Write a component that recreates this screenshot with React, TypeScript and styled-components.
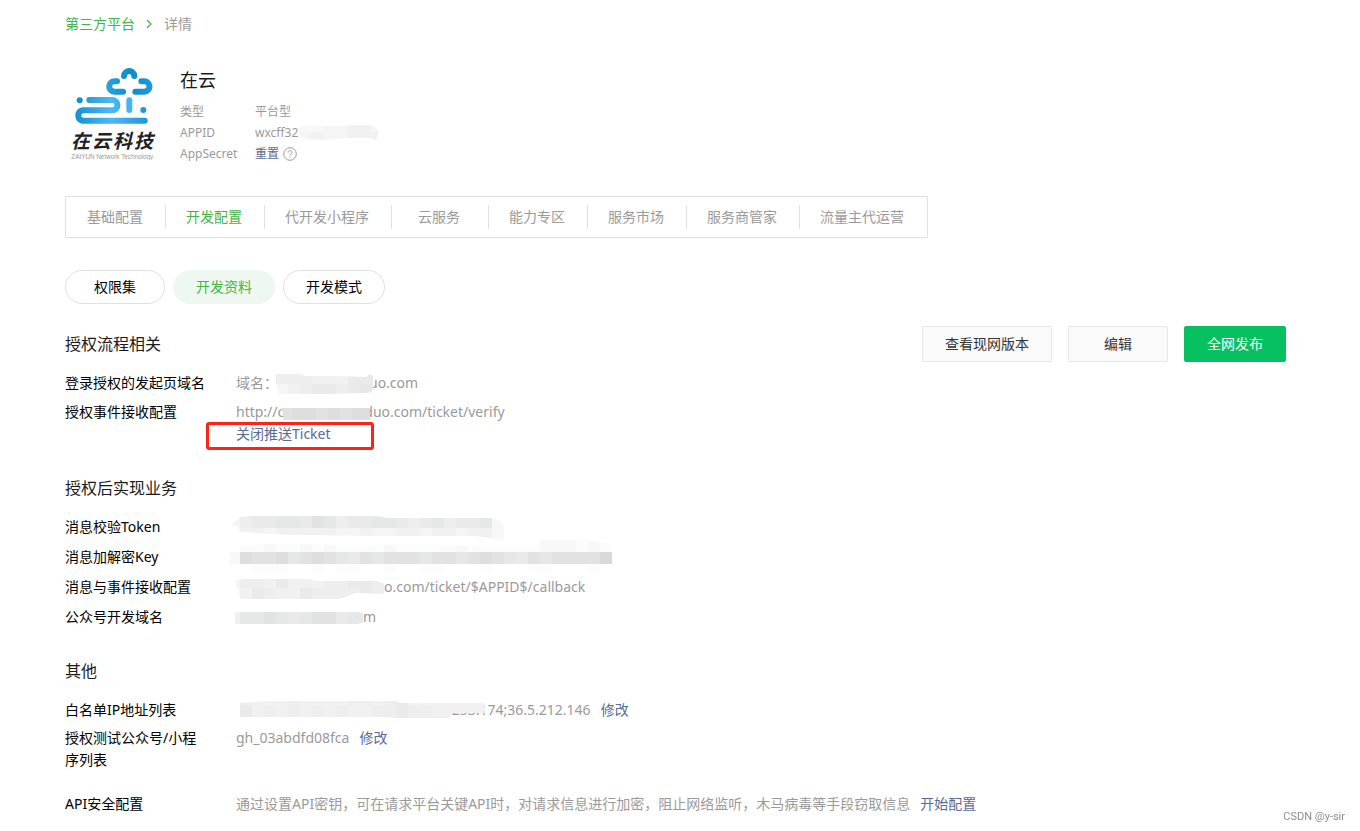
import React from "react";
import styled, { createGlobalStyle, css } from "styled-components";

const color = {
  green: "#44b549",
  link: "#576b95",
  text: "#1a1a1b",
  muted: "#9a9a9a",
  line: "#e0e0e0",
};

const GlobalStyle = createGlobalStyle`
  *, *::before, *::after { box-sizing: border-box; }
  body {
    margin: 0;
    background: #fff;
    color: ${color.text};
    font-family: "Noto Sans", "Noto Sans CJK SC", sans-serif;
    font-size: 14px;
    line-height: 22px;
  }
  h1, h2, dl, dd, dt, ul, ol { margin: 0; padding: 0; font-weight: 400; }
  ul, ol { list-style: none; }
  button { font: inherit; cursor: pointer; }
`;

const Page = styled.div`
  padding: 13px 74px 16px 65px;
`;

const Breadcrumb = styled.ol`
  display: flex;
  align-items: center;
  color: ${color.muted};
`;

const Crumb = styled.li`
  display: flex;
  align-items: center;
`;

const Link = styled.a<{ $tone?: "green"; $spaced?: boolean }>`
  color: ${(p) => (p.$tone === "green" ? color.green : color.link)};
  margin-left: ${(p) => (p.$spaced ? "10px" : "0")};
  text-decoration: none;
`;

const Chevron = styled.svg`
  margin: 0 12px 0 11px;
`;

const Profile = styled.header`
  display: flex;
  gap: 19px;
  margin-top: 29px;
`;

const AppName = styled.h1`
  font-size: 18px;
  line-height: 32px;
  margin-bottom: 5px;
`;

const Facts = styled.dl`
  display: grid;
  grid-template-columns: 75px auto;
  font-size: 12px;
  line-height: 21px;
  color: ${color.muted};
`;

const Fact = styled.dd`
  display: flex;
  align-items: center;
  gap: 4px;
`;

const FactText = styled.span`
  display: flex;
`;

const HelpButton = styled.button`
  display: flex;
  padding: 0;
  border: 0;
  background: none;
`;

const Tabs = styled.ul`
  display: inline-flex;
  align-items: center;
  height: 42px;
  margin-top: 32px;
  padding-right: 1px;
  border: 1px solid ${color.line};
  border-radius: 1px;
`;

const Tab = styled.li`
  & + & { border-left: 1px solid ${color.line}; padding-left: 20px; }
  height: 24px;
  min-width: 97px;
  padding: 0 22px 0 21px;
  line-height: 24px;
  text-align: center;
`;

const TabLink = styled.a<{ $active?: boolean }>`
  color: ${(p) => (p.$active ? color.green : color.muted)};
  text-decoration: none;
  white-space: nowrap;
`;

const Pills = styled.div`
  display: flex;
  gap: 8px;
  margin: 32px 0 22px;
`;

const Pill = styled.button<{ $active?: boolean }>`
  height: 34px;
  min-width: 100px;
  padding: 0 22px;
  border: 1px solid ${color.line};
  border-radius: 17px;
  background: #fff;
  color: #000;
  ${(p) =>
    p.$active &&
    css`
      border-color: #eff8f0;
      background: #eff8f0;
      color: ${color.green};
    `}
`;

const Section = styled.section`
  & + & { margin-top: 31px; }
`;

const SectionBar = styled.div`
  display: flex;
  align-items: center;
  justify-content: space-between;
  margin-bottom: 10px;
`;

const SectionTitle = styled.h2<{ $spaced?: boolean }>`
  font-size: 16px;
  line-height: 24px;
  margin-bottom: ${(p) => (p.$spaced ? "16px" : "0")};
`;

const Actions = styled.div`
  display: flex;
  gap: 16px;
`;

const ActionButton = styled.button<{ $primary?: boolean }>`
  height: 36px;
  min-width: 100px;
  padding: 0 22px;
  border: 1px solid ${(p) => (p.$primary ? "#07c160" : "#e4e6e8")};
  border-radius: 2px;
  background: ${(p) => (p.$primary ? "#07c160" : "#fafafa")};
  color: ${(p) => (p.$primary ? "#fff" : "#353535")};
`;

const Rows = styled.dl<{ $gap: number }>`
  display: flex;
  flex-direction: column;
  gap: ${(p) => p.$gap}px;
`;

const Row = styled.div<{ $apart?: boolean }>`
  display: flex;
  gap: 31px;
  margin-top: ${(p) => (p.$apart ? "16px" : "0")};
`;

const Label = styled.dt`
  flex: 0 0 140px;
  color: #000;
`;

const Value = styled.dd`
  color: ${color.muted};
`;

const Line = styled.div`
  display: flex;
  min-height: 22px;
  white-space: nowrap;
`;

const Marked = styled.span`
  position: relative;
  &::after {
    content: "";
    position: absolute;
    left: -30px;
    top: -1px;
    width: 168px;
    height: 28px;
    border: 3px solid #fb2418;
    border-radius: 3px;
    pointer-events: none;
  }
`;

const SmudgeSvg = styled.svg`
  position: relative;
  z-index: 1;
  flex: none;
  overflow: visible;
`;

const Watermark = styled.small`
  position: fixed;
  right: 15px;
  bottom: 7px;
  color: #8e8e8e;
  font-family: Roboto, sans-serif;
  font-size: 11px;
  line-height: 14px;
`;

const SHADES = ["#fcfcfc", "#f8f8f8", "#f5f5f5", "#f1f1f1", "#eeeeee", "#eaeaea", "#e6e7e7", "#e2e2e2", "#dedede", "#d9d9db"];

type Band = { x: number; y: number; h: number; cells: string };

function Smudge({ id, width, clip, bands }: { id: string; width: number; clip: string; bands: Band[] }) {
  return (
    <SmudgeSvg width={width} height={21} aria-hidden="true">
      <clipPath id={id}>
        <path d={clip} />
      </clipPath>
      <g clipPath={`url(#${id})`} shapeRendering="crispEdges">
        {bands.map((b) =>
          b.cells.split("").map((c, i) =>
            c === " " ? null : (
              <rect key={`${b.y}-${i}`} x={b.x + i * 12} y={b.y} width={12} height={b.h} fill={SHADES[Number(c)]} />
            ),
          ),
        )}
      </g>
    </SmudgeSvg>
  );
}

function Logo() {
  return (
    <svg width="96" height="96" viewBox="15 12 288 288" role="img" aria-label="在云科技">
      <defs>
        <linearGradient id="crown" gradientUnits="userSpaceOnUse" x1="140" y1="0" x2="276" y2="0">
          <stop offset="0" stopColor="#2ba3dc" />
          <stop offset="0.5" stopColor="#0f8ccb" />
          <stop offset="1" stopColor="#2199d6" />
        </linearGradient>
        <linearGradient id="river" gradientUnits="userSpaceOnUse" x1="43" y1="0" x2="262" y2="0">
          <stop offset="0" stopColor="#1190cd" />
          <stop offset="0.5" stopColor="#4cb8f8" />
          <stop offset="1" stopColor="#1c98d8" />
        </linearGradient>
      </defs>
      <g fill="none" strokeWidth="18" strokeLinecap="round">
        <g stroke="url(#crown)">
          <path d="M192 48C194 28 221 28 223 48" />
          <path d="M171 64H163A15.500 15.500 0 0 0 163 95H189" />
          <path d="M244 64H253A15.500 15.500 0 0 1 253 95H226" />
        </g>
        <path stroke="#49b4f0" d="M208 121V150" />
        <path stroke="url(#river)" d="M88 120H157A15.500 15.500 0 0 1 157 151H67A16 16 0 0 0 67 182H254" />
      </g>
      <circle cx="59" cy="121" r="9" fill="#1190cd" />
      <circle cx="250" cy="150" r="9" fill="#2199d6" />
      <text y="263" fontFamily="Noto Sans CJK SC" fontSize="57" fontWeight="700" fontStyle="italic" fill="#222">
        <tspan x="33">在</tspan>
        <tspan x="96">云</tspan>
        <tspan x="159">科</tspan>
        <tspan x="222">技</tspan>
      </text>
      <text x="34" y="298" fontFamily="Liberation Sans" fontSize="19" fill="#9a9a9a">
        ZAIYUN Network Technology
      </text>
    </svg>
  );
}

const TABS = ["基础配置", "开发配置", "代开发小程序", "云服务", "能力专区", "服务市场", "服务商管家", "流量主代运营"];
const PILLS = ["权限集", "开发资料", "开发模式"];

export default function App() {
  return (
    <>
      <GlobalStyle />
      <Page>
        <nav aria-label="面包屑">
          <Breadcrumb>
            <Crumb>
              <Link href="#platform" $tone="green">第三方平台</Link>
              <Chevron width="6" height="10" viewBox="0 0 6 10" aria-hidden="true">
                <path d="M1 1l4 4-4 4" fill="none" stroke={color.green} strokeWidth="1.300" />
              </Chevron>
            </Crumb>
            <Crumb>详情</Crumb>
          </Breadcrumb>
        </nav>

        <Profile>
          <Logo />
          <div>
            <AppName>在云</AppName>
            <Facts>
              <dt>类型</dt>
              <Fact>平台型</Fact>
              <dt>APPID</dt>
              <Fact>
                <FactText>
                  wxcff32
                  <Smudge
                    id="s-appid"
                    width={80}
                    clip="M0 7L5 4L48 4L56 3L72 3Q80 6 81 10L78 18L73 16L50 16L24 18L1 16Z"
                    bands={[{ x: -11, y: 2, h: 8, cells: "11122332" }, { x: -11, y: 10, h: 9, cells: "22322333" }]}
                  />
                </FactText>
              </Fact>
              <dt>AppSecret</dt>
              <Fact>
                <Link href="#reset">重置</Link>
                <HelpButton type="button" aria-label="帮助">
                  <svg width="14" height="14" viewBox="0 0 14 14" fill="none" stroke="#9a9a9a" aria-hidden="true">
                    <circle cx="7" cy="7" r="6.300" />
                    <path d="M5 5.600C5 4.300 5.800 3.600 7 3.600S9 4.300 9 5.400C9 6.700 7 6.800 7 8.400M7 9.600V10.700" />
                  </svg>
                </HelpButton>
              </Fact>
            </Facts>
          </div>
        </Profile>

        <nav aria-label="平台配置">
          <Tabs>
            {TABS.map((name, i) => (
              <Tab key={name}>
                <TabLink href={`#tab-${i}`} $active={i === 1}>{name}</TabLink>
              </Tab>
            ))}
          </Tabs>
        </nav>

        <Pills>
          {PILLS.map((name, i) => (
            <Pill key={name} type="button" $active={i === 1}>{name}</Pill>
          ))}
        </Pills>

        <main>
          <Section>
            <SectionBar>
              <SectionTitle>授权流程相关</SectionTitle>
              <Actions>
                <ActionButton type="button">查看现网版本</ActionButton>
                <ActionButton type="button">编辑</ActionButton>
                <ActionButton type="button" $primary>全网发布</ActionButton>
              </Actions>
            </SectionBar>
            <Rows $gap={7}>
              <Row>
                <Label>登录授权的发起页域名</Label>
                <Value>
                  <Line>
                    域名：
                    <Smudge
                      id="s-domain"
                      width={91}
                      clip="M-2 2H23L26 4H58L88 5L92 2L95 4V18Q93 21 88 21L50 22H1L-2 12Z"
                      bands={[{ x: -2, y: 2, h: 10, cells: "444333556" }, { x: -2, y: 12, h: 10, cells: "23455456" }, { x: 94, y: 12, h: 10, cells: "4" }]}
                    />
                    uo.com
                  </Line>
                </Value>
              </Row>
              <Row>
                <Label>授权事件接收配置</Label>
                <Value>
                  <Line>
                    http://c
                    <Smudge
                      id="s-http"
                      width={80}
                      clip="M-3 4L0 2H86V19H-1V11L-3 10Z"
                      bands={[{ x: -4, y: 7, h: 12, cells: "78878788" }]}
                    />
                    duo.com/ticket/verify
                  </Line>
                  <Line>
                    <Marked>
                      <Link href="#ticket">关闭推送Ticket</Link>
                    </Marked>
                  </Line>
                </Value>
              </Row>
            </Rows>
          </Section>

          <Section>
            <SectionTitle $spaced>授权后实现业务</SectionTitle>
            <Rows $gap={8}>
              <Row>
                <Label>消息校验Token</Label>
                <Value>
                  <Line>
                    <Smudge
                      id="s-token"
                      width={268}
                      clip="M-5 9L4 1L14 0H140L152 2H255Q268 4 268 12V24L240 20H190L140 20L60 19L20 17L2 15L2 10Z"
                      bands={[
                        { x: -8, y: 0, h: 12, cells: "24556657645566545645561" },
                        { x: -8, y: 12, h: 12, cells: "13323333322322332332331" },
                      ]}
                    />
                  </Line>
                </Value>
              </Row>
              <Row>
                <Label>消息加解密Key</Label>
                <Value>
                  <Line>
                    <Smudge
                      id="s-key"
                      width={376}
                      clip="M-7 0L30 -2L300 0L304 -6H350L376 -2V26H-6L-8 17L-5 13Z"
                      bands={[
                        { x: -8, y: -6, h: 12, cells: " 0010010100001000001000000111010" },
                        { x: -8, y: 6, h: 12, cells: "18778678765767776776787657677779" },
                        { x: -8, y: 18, h: 8, cells: "  000  0 00  0  00   0   00   0 " },
                      ]}
                    />
                  </Line>
                </Value>
              </Row>
              <Row>
                <Label>消息与事件接收配置</Label>
                <Value>
                  <Line>
                    <Smudge
                      id="s-event"
                      width={148}
                      clip="M0 4L8 3H74L79 5H140L149 8V18L120 17L104 23H4L2 14L0 9Z"
                      bands={[{ x: -8, y: 0, h: 12, cells: "2443533344554" }, { x: -8, y: 12, h: 12, cells: "1354335444454" }]}
                    />
                    o.com/ticket/$APPID$/callback
                  </Line>
                </Value>
              </Row>
              <Row>
                <Label>公众号开发域名</Label>
                <Value>
                  <Line>
                    <Smudge
                      id="s-wx"
                      width={127}
                      clip="M-1 6H120L127 7V17L120 18H-1Z"
                      bands={[{ x: -8, y: 6, h: 12, cells: "366765677566" }]}
                    />
                    m
                  </Line>
                </Value>
              </Row>
            </Rows>
          </Section>

          <Section>
            <SectionTitle $spaced>其他</SectionTitle>
            <Rows $gap={6}>
              <Row>
                <Label>白名单IP地址列表</Label>
                <Value>
                  <Line>
                    <Smudge
                      id="s-ip"
                      width={212}
                      clip="M3 4L36 2H160L164 4H248L250 14H218L212 19H160L150 18H3Z"
                      bands={[{ x: 4, y: 0, h: 6, cells: "433343333443452333333" }, { x: 4, y: 6, h: 13, cells: "534343434334454433333" }]}
                    />
                    .253.174;36.5.212.146
                    <Link href="#whitelist" $spaced>修改</Link>
                  </Line>
                </Value>
              </Row>
              <Row>
                <Label>授权测试公众号/小程序列表</Label>
                <Value>
                  <Line>
                    gh_03abdfd08fca
                    <Link href="#testers" $spaced>修改</Link>
                  </Line>
                </Value>
              </Row>
              <Row $apart>
                <Label>API安全配置</Label>
                <Value>
                  通过设置API密钥，可在请求平台关键API时，对请求信息进行加密，阻止网络监听，木马病毒等手段窃取信息
                  <Link href="#security" $spaced>开始配置</Link>
                </Value>
              </Row>
            </Rows>
          </Section>
        </main>
      </Page>
      <Watermark>CSDN @y-sir</Watermark>
    </>
  );
}
